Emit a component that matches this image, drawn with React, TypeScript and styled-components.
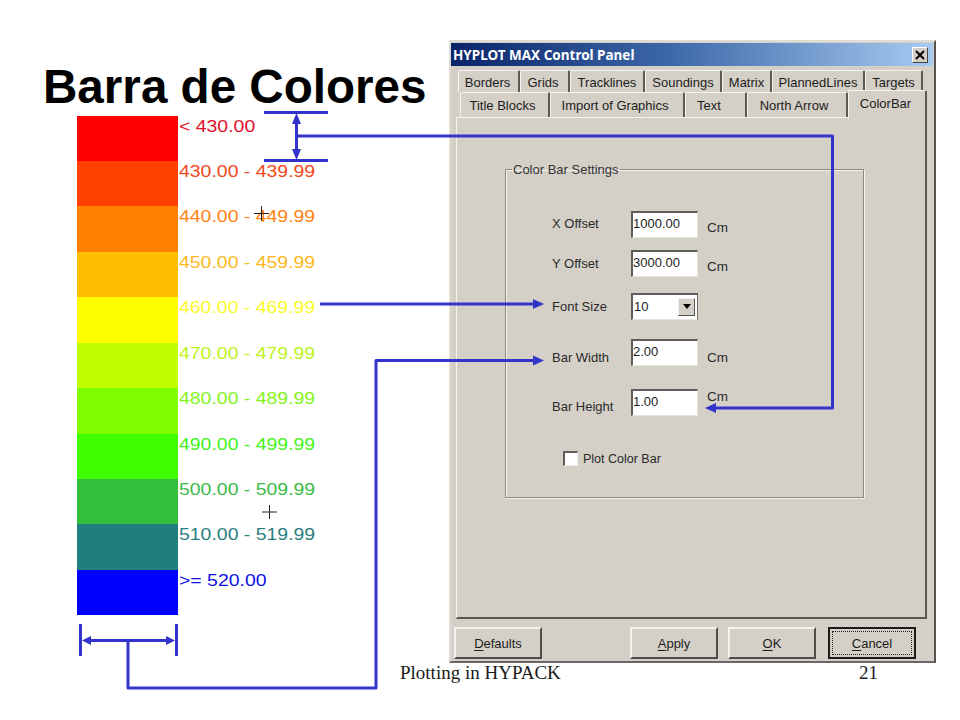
import styled, { createGlobalStyle } from 'styled-components'

const Global = createGlobalStyle`
  html, body { margin: 0; padding: 0; background: #fff; }
`

const Slide = styled.div`
  position: relative;
  width: 960px;
  height: 720px;
  overflow: hidden;
  background: #fff;
  display: grid;
  grid-template-columns: 449px 487px;
  grid-template-rows: 663px 57px;
  font-family: "Liberation Sans", Arial, sans-serif;
`
const LeftColumn = styled.div`
  display: flex;
  flex-direction: column;
  padding-left: 43px;
`
const Title = styled.h1`
  margin: 0;
  padding-top: 59px;
  height: 56.5px;
  font-size: 47.6px;
  line-height: 55px;
  font-weight: bold;
  color: #000;
  white-space: nowrap;
`
const ColorBar = styled.div`
  display: grid;
  grid-auto-rows: 45.45px;
  margin-left: 34px;
`
const BarRow = styled.div`
  display: flex;
  align-items: flex-start;
`
const Swatch = styled.div<{ $fill: string }>`
  width: 101px;
  height: 100%;
  flex: none;
  background: ${p => p.$fill};
`
const BarLabel = styled.span<{ $ink: string }>`
  margin-left: 1px;
  font-size: 16.5px;
  line-height: 20px;
  color: ${p => p.$ink};
  white-space: nowrap;
  transform: scaleX(1.178);
  transform-origin: left center;
`

const Dialog = styled.div`
  box-sizing: border-box;
  margin-top: 40px;
  height: 623px;
  display: flex;
  flex-direction: column;
  background: #d4d0c8;
  border: 2px solid;
  border-color: #dfdcd6 #55534f #6a6864 #dfdcd6;
  font-size: 13px;
  color: #1c1c1c;
`
const TitleBar = styled.div`
  display: flex;
  align-items: center;
  justify-content: space-between;
  height: 23px;
  margin: 1px 1px 0 0;
  padding: 0 5px 0 2px;
  background: linear-gradient(90deg, #0a246a 0%, #3c68a8 45%, #a6caf0 100%);
  color: #fff;
  font-family: "Noto Sans", sans-serif;
  font-weight: bold;
  font-size: 13.5px;
`
const CloseButton = styled.div`
  box-sizing: border-box;
  width: 16px;
  height: 16px;
  display: flex;
  align-items: center;
  justify-content: center;
  background: #d4d0c8;
  border: 1px solid;
  border-color: #fff #444 #444 #fff;
`
const TabRow = styled.div<{ $left: number; $top: number; $height: number }>`
  display: flex;
  align-items: flex-end;
  height: ${p => p.$height}px;
  margin: ${p => p.$top}px 0 0 ${p => p.$left}px;
`
const Tab = styled.div<{ $w: number; $active?: boolean; $trim?: number }>`
  box-sizing: border-box;
  position: relative;
  z-index: ${p => (p.$active ? 2 : 0)};
  width: ${p => p.$w}px;
  height: ${p => (p.$active ? '29px' : '100%')};
  margin-bottom: ${p => (p.$active ? -2 : 0)}px;
  display: flex;
  align-items: ${p => (p.$active ? 'flex-start' : 'center')};
  justify-content: center;
  padding-top: ${p => (p.$active ? 5 : 1)}px;
  padding-right: ${p => p.$trim ?? 0}px;
  background: #d4d0c8;
  border: solid;
  border-width: 1px 2px 0 1px;
  border-color: #f4f3ef #5b5955 #d4d0c8 #f4f3ef;
  border-radius: 2px 2px 0 0;
  white-space: nowrap;
`
const Pane = styled.div`
  box-sizing: border-box;
  position: relative;
  width: 471px;
  height: 502px;
  margin-left: 5px;
  padding: 50px 0 0 48px;
  border: solid;
  border-width: 1px 2px 2px 1px;
  border-color: #f4f3ef #5b5955 #5b5955 #f4f3ef;
`
const GroupBox = styled.fieldset`
  box-sizing: border-box;
  width: 359px;
  height: 336px;
  margin: -6px 0 0;
  padding: 0 0 0 46px;
  border: 1px solid #8a8882;
  box-shadow: 1px 1px 0 #f4f3ef, inset 1px 1px 0 #f4f3ef;
`
const Legend = styled.legend`
  margin-left: -40px;
  padding: 0 1px;
  font-size: 13px;
  line-height: 15px;
  color: #333;
`
const FieldRow = styled.div<{ $gap: number }>`
  display: flex;
  align-items: flex-start;
  height: 27px;
  margin-top: ${p => p.$gap}px;
`
const FieldLabel = styled.label<{ $dy: number }>`
  width: 79px;
  padding-top: ${p => p.$dy}px;
  line-height: 16px;
  font-size: 13px;
  color: #2a2a2a;
`
const TextInput = styled.input`
  box-sizing: border-box;
  width: 67px;
  height: 27px;
  margin: 0;
  padding: 0 0 4px 0;
  background: #fff;
  border: solid;
  border-width: 2px 1px 1px 2px;
  border-color: #5f5d5a #e6e4df #e6e4df #5f5d5a;
  border-radius: 0;
  outline: none;
  font-family: inherit;
  font-size: 13px;
  color: #1c1c1c;
`
const Unit = styled.span<{ $dy: number }>`
  margin-left: 9px;
  padding-top: ${p => p.$dy}px;
  line-height: 16px;
  font-size: 13.5px;
  color: #2a2a2a;
`
const Select = styled.div`
  box-sizing: border-box;
  width: 67px;
  height: 27px;
  display: flex;
  align-items: center;
  justify-content: space-between;
  padding: 0 2px 1px 1px;
  background: #fff;
  border: solid;
  border-width: 2px 1px 1px 2px;
  border-color: #5f5d5a #6f6d6a #e6e4df #5f5d5a;
  font-size: 13px;
`
const SelectButton = styled.div`
  box-sizing: border-box;
  width: 17px;
  height: 18px;
  display: flex;
  align-items: center;
  justify-content: center;
  background: #d4d0c8;
  border: 1px solid;
  border-color: #f4f3ef #55534f #55534f #f4f3ef;
  &::after {
    content: "";
    border: 4px solid transparent;
    border-top: 5px solid #000;
    border-bottom: 0;
  }
`
const CheckRow = styled.div`
  display: flex;
  align-items: center;
  gap: 5px;
  margin: 35px 0 0 11px;
  font-size: 12.5px;
  color: #2a2a2a;
`
const CheckBox = styled.input`
  appearance: none;
  box-sizing: border-box;
  width: 15px;
  height: 15px;
  margin: 0;
  background: #fff;
  border: solid;
  border-width: 2px 1px 1px 2px;
  border-color: #5f5d5a #eeece8 #eeece8 #5f5d5a;
  border-radius: 0;
`
const ButtonRow = styled.div`
  display: flex;
  height: 32px;
  margin: 8px 0 0 3px;
`
const Button = styled.div<{ $gap?: number; $focused?: boolean }>`
  box-sizing: border-box;
  position: relative;
  width: 88px;
  height: 32px;
  margin-left: ${p => p.$gap ?? 0}px;
  display: flex;
  align-items: center;
  justify-content: center;
  border: 2px solid;
  border-color: ${p => (p.$focused ? '#1a1a1a' : '#f4f3ef #4f4d49 #4f4d49 #f4f3ef')};
  font-size: 13px;
  ${p => p.$focused && `
    &::before {
      content: "";
      position: absolute;
      inset: 2px;
      border: 1px dotted #222;
    }
  `}
  u { text-underline-offset: 2px; }
`
const Footer = styled.div`
  grid-column: 1 / -1;
  display: flex;
  justify-content: space-between;
  padding: 0 58px 0 400px;
  font-family: "Liberation Serif", "Times New Roman", serif;
  font-size: 19px;
  line-height: 20px;
  color: #1a1a1a;
`
const Overlay = styled.svg`
  position: absolute;
  left: 0;
  top: 0;
  z-index: 5;
  pointer-events: none;
`

const bands = [
  { fill: '#ff0000', ink: '#e0102a', text: '< 430.00' },
  { fill: '#ff4000', ink: '#f2481c', text: '430.00 - 439.99' },
  { fill: '#ff8000', ink: '#ff8414', text: '440.00 - 449.99' },
  { fill: '#ffbf00', ink: '#fcb81c', text: '450.00 - 459.99' },
  { fill: '#ffff00', ink: '#fbfb2a', text: '460.00 - 469.99' },
  { fill: '#bfff00', ink: '#bcf41c', text: '470.00 - 479.99' },
  { fill: '#80ff00', ink: '#84f41c', text: '480.00 - 489.99' },
  { fill: '#40ff00', ink: '#44f41c', text: '490.00 - 499.99' },
  { fill: '#33bf3c', ink: '#3cbb48', text: '500.00 - 509.99' },
  { fill: '#1f7f7f', ink: '#2a8080', text: '510.00 - 519.99' },
  { fill: '#0000ff', ink: '#1010e8', text: '>= 520.00' },
]

const topTabs = [
  { label: 'Borders', w: 62, trim: 2 },
  { label: 'Grids', w: 50, trim: 3 },
  { label: 'Tracklines', w: 75, trim: 0 },
  { label: 'Soundings', w: 77, trim: 0 },
  { label: 'Matrix', w: 50, trim: 0 },
  { label: 'PlannedLines', w: 93, trim: 0 },
  { label: 'Targets', w: 58, trim: 0 },
]
const lowerTabs = [
  { label: 'Title Blocks', w: 90, trim: 4 },
  { label: 'Import of Graphics', w: 135, trim: 4 },
  { label: 'Text', w: 62, trim: 13 },
  { label: 'North Arrow', w: 101, trim: 6 },
]

const BLUE = '#3333cc'

function Arrows() {
  return (
    <Overlay width="960" height="720" viewBox="0 0 960 720">
      <g stroke={BLUE} strokeWidth="3" fill="none">
        <path d="M264 112.5H328M264 160.5H328M296.5 118V155" />
        <path d="M297 136H832.5V408H712" strokeLinejoin="round" />
        <path d="M320 304H536" />
        <path d="M536 360.5H376V688H128V641" strokeLinejoin="round" />
        <path d="M80.5 624V656M176.5 624V656M88 640.5H170" />
      </g>
      <g fill={BLUE}>
        <path d="M296.5 113L292 124H301Z" />
        <path d="M296.5 160L292 149H301Z" />
        <path d="M705 408L716 403V413Z" />
        <path d="M544 304L533 299V309Z" />
        <path d="M544 360.5L533 355.5V365.5Z" />
        <path d="M82 640.5L91 636V645Z" />
        <path d="M175 640.5L166 636V645Z" />
      </g>
      <g stroke="#222" strokeWidth="1" fill="none">
        <path d="M254 213.5H269M261.5 206V221" />
        <path d="M262 512H277M269.5 505V519" />
      </g>
    </Overlay>
  )
}

export default function App() {
  return (
    <Slide>
      <Global />
      <LeftColumn>
        <Title>Barra de Colores</Title>
        <ColorBar>
          {bands.map(band => (
            <BarRow key={band.text}>
              <Swatch $fill={band.fill} />
              <BarLabel $ink={band.ink}>{band.text}</BarLabel>
            </BarRow>
          ))}
        </ColorBar>
      </LeftColumn>

      <Dialog>
        <TitleBar>
          HYPLOT MAX Control Panel
          <CloseButton>
            <svg width="10" height="10" viewBox="0 0 10 10">
              <path d="M1 1L9 9M9 1L1 9" stroke="#000" strokeWidth="2" />
            </svg>
          </CloseButton>
        </TitleBar>
        <TabRow $left={7} $top={4} $height={22}>
          {topTabs.map(tab => (
            <Tab key={tab.label} $w={tab.w} $trim={tab.trim}>{tab.label}</Tab>
          ))}
        </TabRow>
        <TabRow $left={9} $top={0} $height={25}>
          {lowerTabs.map(tab => (
            <Tab key={tab.label} $w={tab.w} $trim={tab.trim}>{tab.label}</Tab>
          ))}
          <Tab $w={79} $active $trim={3}>ColorBar</Tab>
        </TabRow>
        <Pane>
          <GroupBox>
            <Legend>Color Bar Settings</Legend>
            <FieldRow $gap={34}>
              <FieldLabel $dy={5}>X Offset</FieldLabel>
              <TextInput readOnly value="1000.00" />
              <Unit $dy={9}>Cm</Unit>
            </FieldRow>
            <FieldRow $gap={12}>
              <FieldLabel $dy={6}>Y Offset</FieldLabel>
              <TextInput readOnly value="3000.00" />
              <Unit $dy={9}>Cm</Unit>
            </FieldRow>
            <FieldRow $gap={16}>
              <FieldLabel $dy={6}>Font Size</FieldLabel>
              <Select>
                10
                <SelectButton />
              </Select>
            </FieldRow>
            <FieldRow $gap={19}>
              <FieldLabel $dy={11}>Bar Width</FieldLabel>
              <TextInput readOnly value="2.00" />
              <Unit $dy={11}>Cm</Unit>
            </FieldRow>
            <FieldRow $gap={23}>
              <FieldLabel $dy={10}>Bar Height</FieldLabel>
              <TextInput readOnly value="1.00" />
              <Unit $dy={0}>Cm</Unit>
            </FieldRow>
            <CheckRow>
              <CheckBox type="checkbox" readOnly />
              Plot Color Bar
            </CheckRow>
          </GroupBox>
        </Pane>
        <ButtonRow>
          <Button><span><u>D</u>efaults</span></Button>
          <Button $gap={88}><span><u>A</u>pply</span></Button>
          <Button $gap={10}><span><u>O</u>K</span></Button>
          <Button $gap={12} $focused><span><u>C</u>ancel</span></Button>
        </ButtonRow>
      </Dialog>

      <Footer>
        <span>Plotting in HYPACK</span>
        <span>21</span>
      </Footer>
      <Arrows />
    </Slide>
  )
}
